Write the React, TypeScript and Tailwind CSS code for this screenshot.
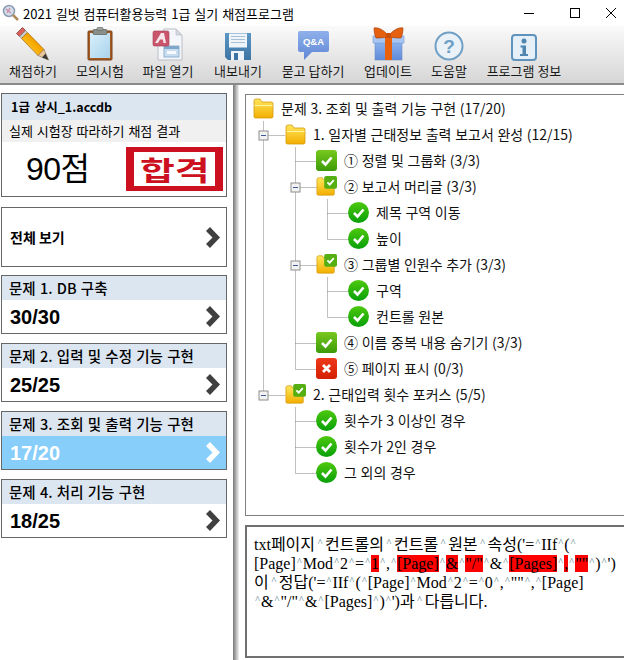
import React from 'react'

const KR = { fontFamily: '"Noto Sans CJK KR", "Liberation Sans", sans-serif' }

const PencilIcon = () => (
    <svg width="34" height="34" viewBox="0 0 34 34">
        <defs>
            <linearGradient id="pencilBody" x1="0" y1="1" x2="1" y2="0">
                <stop offset="0" stopColor="#ffdc50" />
                <stop offset="0.55" stopColor="#f7a800" />
                <stop offset="1" stopColor="#c97400" />
            </linearGradient>
        </defs>
        <path d="M6.5 0.5 L0.5 6.5 L3.5 9.5 L9.5 3.5 Z" fill="#d8605c" stroke="#8a3a38" strokeWidth="0.8" />
        <path d="M3.5 9.5 L9.5 3.5 L11.5 5.5 L5.5 11.5 Z" fill="#c9c9c9" stroke="#777" strokeWidth="0.6" />
        <path d="M5.5 11.5 L11.5 5.5 L28 22.5 L22 28.5 Z" fill="url(#pencilBody)" stroke="#a86a10" strokeWidth="0.7" />
        <path d="M22 28.5 L28 22.5 L32.5 33 Z" fill="#e9c79a" stroke="#8d6a45" strokeWidth="0.6" />
        <path d="M29.5 26.5 L32.5 33 L26 30.5 Z" fill="#3a3a3a" />
    </svg>
)

const ClipboardIcon = () => (
    <svg width="26" height="34" viewBox="0 0 26 34">
        <defs>
            <linearGradient id="clipPaper" x1="0" y1="0" x2="1" y2="1">
                <stop offset="0" stopColor="#d9effa" />
                <stop offset="1" stopColor="#a9d3ec" />
            </linearGradient>
        </defs>
        <rect x="1" y="4" width="24" height="29" rx="1" fill="#a65a22" stroke="#7b4116" />
        <rect x="3" y="6" width="20" height="25" fill="url(#clipPaper)" />
        <rect x="6" y="2.5" width="14" height="5" rx="1" fill="#8a8f8a" stroke="#5a5f5a" strokeWidth="0.7" />
        <rect x="10" y="0.5" width="6" height="3" rx="1" fill="#9ea39e" stroke="#5a5f5a" strokeWidth="0.6" />
    </svg>
)

const AccessIcon = () => (
    <svg width="32" height="33" viewBox="0 0 32 33">
        <path d="M12 1 H24 L30 7 V32 H6 V14 Z" fill="#f4f6f9" stroke="#b9bec6" />
        <path d="M24 1 V7 H30 Z" fill="#d5d9df" stroke="#b9bec6" strokeWidth="0.7" />
        <rect x="12" y="18" width="15" height="11" fill="#c8def0" stroke="#7ea6c9" strokeWidth="0.8" />
        <rect x="12" y="18" width="15" height="3" fill="#7ea6c9" />
        <rect x="15" y="23" width="9" height="3" fill="#f7fafc" />
        <rect x="1" y="3" width="16" height="15" rx="1.5" fill="#c9566b" stroke="#a53c52" strokeWidth="0.6" />
        <path d="M3 15 L9 5 H12 L14 15 H11.5 L10.8 11.5 H8 L6 15 Z" fill="#f7e7ea" />
    </svg>
)

const FloppyIcon = () => (
    <svg width="28" height="29" viewBox="0 0 28 29">
        <defs>
            <linearGradient id="floppyBody" x1="0" y1="0" x2="0" y2="1">
                <stop offset="0" stopColor="#5d97c4" />
                <stop offset="1" stopColor="#3d74a3" />
            </linearGradient>
        </defs>
        <path d="M1 1 H27 V28 H4 L1 25 Z" fill="url(#floppyBody)" />
        <rect x="5" y="1.5" width="18" height="14" fill="#eef4f9" />
        <path d="M7 4.5 H21 M7 7.5 H21 M7 10.5 H21" stroke="#a8c0d4" />
        <rect x="7" y="19" width="13" height="9" fill="#eef4f9" />
        <rect x="10" y="21" width="4" height="7" fill="#3d74a3" />
    </svg>
)

const QnaIcon = () => (
    <svg width="33" height="31" viewBox="0 0 33 31">
        <defs>
            <linearGradient id="qnaBubble" x1="0" y1="0" x2="0" y2="1">
                <stop offset="0" stopColor="#8fb0ea" />
                <stop offset="1" stopColor="#5f86d6" />
            </linearGradient>
        </defs>
        <path d="M3 1 H30 A2 2 0 0 1 32 3 V20 A2 2 0 0 1 30 22 H15 L7 30 V22 H3 A2 2 0 0 1 1 20 V3 A2 2 0 0 1 3 1 Z" fill="url(#qnaBubble)" />
        <text x="16.5" y="15" textAnchor="middle" fill="#ffffff" fontSize="9.5" fontWeight="700" fontFamily='"Liberation Sans", sans-serif'>Q&amp;A</text>
    </svg>
)

const GiftIcon = () => (
    <svg width="33" height="34" viewBox="0 0 33 34">
        <defs>
            <linearGradient id="giftBox" x1="0" y1="0" x2="0" y2="1">
                <stop offset="0" stopColor="#8cb2ee" />
                <stop offset="1" stopColor="#5f8ad8" />
            </linearGradient>
        </defs>
        <rect x="3" y="15" width="27" height="18" fill="url(#giftBox)" stroke="#6b8cc7" strokeWidth="0.6" />
        <rect x="1" y="9" width="31" height="7" fill="#a7c6f3" stroke="#7a9ad2" strokeWidth="0.6" />
        <rect x="13" y="9" width="7" height="24" fill="#e85f0c" />
        <path d="M16.5 9 C12 3 6 0 2 1 C2 5 3 9 4 11 C8 11 13 11 16.5 9 Z" fill="#e5600f" stroke="#a94008" strokeWidth="0.7" />
        <path d="M16.5 9 C21 3 27 0 31 1 C31 5 30 9 29 11 C25 11 20 11 16.5 9 Z" fill="#e5600f" stroke="#a94008" strokeWidth="0.7" />
        <rect x="14" y="6" width="5" height="5" rx="1" fill="#c9500b" />
    </svg>
)

const HelpIcon = () => (
    <svg width="30" height="30" viewBox="0 0 30 30">
        <circle cx="15" cy="15" r="13.5" fill="#eaf2f8" stroke="#6f9fc4" strokeWidth="2" />
        <text x="15" y="21.5" textAnchor="middle" fill="#6f9fc4" fontSize="19" fontWeight="700" fontFamily='"Liberation Sans", sans-serif'>?</text>
    </svg>
)

const InfoIcon = () => (
    <svg width="26" height="27" viewBox="0 0 26 27">
        <rect x="1" y="1" width="24" height="25" rx="3" fill="#e4eff7" stroke="#5f93bb" strokeWidth="2" />
        <circle cx="13" cy="7" r="2.5" fill="#4f86b0" />
        <path d="M9.5 11.5 H15 V20 H17 V22 H9 V20 H11.5 V13.5 H9.5 Z" fill="#4f86b0" />
    </svg>
)

const Chevron = ({ white = false }: { white?: boolean }) => (
    <svg width="14" height="21" viewBox="0 0 14 21" className={white ? 'text-white' : 'text-[#404040]'}>
        <path d="M0 4 L4 0 L14 10.5 L4 21 L0 17 L6.5 10.5 Z" fill="currentColor" />
    </svg>
)

const FolderIcon = ({ id }: { id: string }) => (
    <svg width="21" height="21" viewBox="0 0 21 21">
        <defs>
            <linearGradient id={id} x1="0" y1="0" x2="0" y2="1">
                <stop offset="0" stopColor="#ffe75c" />
                <stop offset="1" stopColor="#f2ae00" />
            </linearGradient>
        </defs>
        <path d="M1 3 A2 2 0 0 1 3 1 H7 L9 4 H19 A2 2 0 0 1 20 6 V19 A1.5 1.5 0 0 1 18.5 20 H2.5 A1.5 1.5 0 0 1 1 19 Z" fill={`url(#${id})`} stroke="#d69a10" strokeWidth="0.8" />
        <path d="M1.5 7.5 H19.5" stroke="#fff3a6" />
    </svg>
)

const CheckMark = () => <path d="M6 11 L9.5 14.5 L15.5 7.5" fill="none" stroke="#ffffff" strokeWidth="2.6" />

const SquareCheck = ({ id }: { id: string }) => (
    <svg width="21" height="21" viewBox="0 0 21 21">
        <defs>
            <linearGradient id={id} x1="0" y1="0" x2="0" y2="1">
                <stop offset="0" stopColor="#78c81e" />
                <stop offset="1" stopColor="#3c9a08" />
            </linearGradient>
        </defs>
        <rect x="0" y="0" width="21" height="21" rx="3" fill={`url(#${id})`} />
        <CheckMark />
    </svg>
)

const SquareCross = () => (
    <svg width="21" height="21" viewBox="0 0 21 21">
        <defs>
            <linearGradient id="crossRed" x1="0" y1="0" x2="0" y2="1">
                <stop offset="0" stopColor="#ee3a1c" />
                <stop offset="1" stopColor="#d42000" />
            </linearGradient>
        </defs>
        <rect x="0" y="0" width="21" height="21" rx="3" fill="url(#crossRed)" />
        <path d="M7 7 L14 14 M14 7 L7 14" stroke="#ffffff" strokeWidth="2.8" />
    </svg>
)

const CircleCheck = ({ id }: { id: string }) => (
    <svg width="21" height="21" viewBox="0 0 21 21">
        <defs>
            <linearGradient id={id} x1="0" y1="0" x2="0" y2="1">
                <stop offset="0" stopColor="#4ec80e" />
                <stop offset="1" stopColor="#08a008" />
            </linearGradient>
        </defs>
        <circle cx="10.5" cy="10.5" r="10.5" fill={`url(#${id})`} />
        <CheckMark />
    </svg>
)

const FolderCheck = ({ id }: { id: string }) => (
    <svg width="23" height="22" viewBox="0 0 23 22">
        <defs>
            <linearGradient id={id} x1="0" y1="0" x2="0" y2="1">
                <stop offset="0" stopColor="#ffe75c" />
                <stop offset="1" stopColor="#f2ae00" />
            </linearGradient>
        </defs>
        <path d="M1 4 A2 2 0 0 1 3 2 H7 L8 4 H20 V20 A1.5 1.5 0 0 1 18.5 21 H2.5 A1.5 1.5 0 0 1 1 20 Z" fill={`url(#${id})`} stroke="#d69a10" strokeWidth="0.8" />
        <rect x="9" y="0" width="14" height="14" rx="2" fill="#55ae12" />
        <path d="M12.5 7 L15 9.5 L19.5 4.5" fill="none" stroke="#ffffff" strokeWidth="2" />
    </svg>
)

const TOOLBAR = [
    { label: '채점하기', width: 'w-[66px]', icon: <PencilIcon /> },
    { label: '모의시험', width: 'w-[68px]', icon: <ClipboardIcon /> },
    { label: '파일 열기', width: 'w-[68px]', icon: <AccessIcon /> },
    { label: '내보내기', width: 'w-[72px]', icon: <FloppyIcon /> },
    { label: '묻고 답하기', width: 'w-[78px]', icon: <QnaIcon /> },
    { label: '업데이트', width: 'w-[72px]', icon: <GiftIcon /> },
    { label: '도움말', width: 'w-[50px]', icon: <HelpIcon /> },
    { label: '프로그램 정보', width: 'w-[100px]', icon: <InfoIcon /> },
]

const QUESTIONS = [
    { title: '문제 1. DB 구축', score: '30/30', active: false },
    { title: '문제 2. 입력 및 수정 기능 구현', score: '25/25', active: false },
    { title: '문제 3. 조회 및 출력 기능 구현', score: '17/20', active: true },
    { title: '문제 4. 처리 기능 구현', score: '18/25', active: false },
]

const TREE = [
    { level: 0, icon: <FolderIcon id="f0" />, text: '문제 3. 조회 및 출력 기능 구현 (17/20)' },
    { level: 1, icon: <FolderIcon id="f1" />, text: '1. 일자별 근태정보 출력 보고서 완성 (12/15)' },
    { level: 2, icon: <SquareCheck id="s1" />, text: '① 정렬 및 그룹화 (3/3)' },
    { level: 2, icon: <FolderCheck id="c1" />, text: '② 보고서 머리글 (3/3)' },
    { level: 3, icon: <CircleCheck id="o1" />, text: '제목 구역 이동' },
    { level: 3, icon: <CircleCheck id="o2" />, text: '높이' },
    { level: 2, icon: <FolderCheck id="c2" />, text: '③ 그룹별 인원수 추가 (3/3)' },
    { level: 3, icon: <CircleCheck id="o3" />, text: '구역' },
    { level: 3, icon: <CircleCheck id="o4" />, text: '컨트롤 원본' },
    { level: 2, icon: <SquareCheck id="s2" />, text: '④ 이름 중복 내용 숨기기 (3/3)' },
    { level: 2, icon: <SquareCross />, text: '⑤ 페이지 표시 (0/3)' },
    { level: 1, icon: <FolderCheck id="c3" />, text: '2. 근태입력 횟수 포커스 (5/5)' },
    { level: 2, icon: <CircleCheck id="o5" />, text: '횟수가 3 이상인 경우' },
    { level: 2, icon: <CircleCheck id="o6" />, text: '횟수가 2인 경우' },
    { level: 2, icon: <CircleCheck id="o7" />, text: '그 외의 경우' },
]

// connector lines of the tree, in coordinates of the tree box
const TREE_LINES = [
    'M17 26 V300', 'M17 40 H38', 'M17 300 H38',
    'M49 52 V274', 'M49 66 H70', 'M49 92 H70', 'M49 170 H70', 'M49 248 H70', 'M49 274 H70',
    'M81 104 V144', 'M81 118 H102', 'M81 144 H102',
    'M81 182 V222', 'M81 196 H102', 'M81 222 H102',
    'M49 312 V378', 'M49 326 H70', 'M49 352 H70', 'M49 378 H70',
]

const EXPANDERS = [[17, 40], [49, 92], [49, 170], [17, 300]]

// wide: the gap between two hangul words, which the reference draws a bit larger
const Caret = ({ wide = false }: { wide?: boolean }) => (
    <span className={`inline-block text-center text-[10px] leading-none align-[4px] text-[#44727a] ${wide ? 'w-[10px]' : 'w-[7px]'}`}>^</span>
)

const Red = ({ children }: { children: React.ReactNode }) => <span className="bg-[#ff0000]">{children}</span>

export default function App() {
    return (
        <div className="w-[624px] h-[660px] flex flex-col overflow-hidden bg-white text-black" style={KR}>
            {/* Title bar */}
            <div className="h-[26px] flex items-center shrink-0">
                <svg width="18" height="18" viewBox="0 0 18 18" className="ml-[2px]">
                    <circle cx="7" cy="7" r="5.5" fill="#d5dde8" stroke="#8b9bb4" strokeWidth="1.5" />
                    <path d="M4 5 L9 9 M8 4 L5 9" stroke="#c987a4" strokeWidth="1.2" />
                    <path d="M11 11 L16 16" stroke="#b08a5a" strokeWidth="2.5" />
                </svg>
                <span className="ml-[3px] text-[13px] leading-none [word-spacing:1px]">2021 길벗 컴퓨터활용능력 1급 실기 채점프로그램</span>
                <div className="ml-auto flex items-center">
                    <div className="w-[46px] h-[26px] flex items-center justify-center">
                        <div className="w-[10px] h-px bg-black" />
                    </div>
                    <div className="w-[46px] h-[26px] flex items-center justify-center">
                        <div className="w-[10px] h-[10px] border border-black" />
                    </div>
                    <svg width="10" height="10" viewBox="0 0 10 10" className="mx-[8px]">
                        <path d="M0 0 L10 10 M10 0 L0 10" stroke="#000" strokeWidth="1" />
                    </svg>
                </div>
            </div>

            {/* Toolbar */}
            <div className="h-[59px] shrink-0 flex bg-gradient-to-b from-[#fafafa] to-[#d6d6d6] border-b-2 border-[#8a8a8a]">
                {TOOLBAR.map(item => (
                    <div key={item.label} className={`${item.width} flex flex-col items-center`}>
                        <div className="h-[35px] flex items-end justify-center">{item.icon}</div>
                        <span className="mt-[2px] text-[13px] leading-[16px] whitespace-nowrap text-[#1a1a1a]">{item.label}</span>
                    </div>
                ))}
            </div>

            <div className="flex-1 flex min-h-0">
                {/* Left panel */}
                <div className="w-[233px] shrink-0 pl-px pr-[6px] pt-[8px] flex flex-col">
                    <div className="h-[104px] border border-[#666666] flex flex-col">
                        <div className="h-[26px] bg-[#dce6f1] flex items-center pl-[9px] text-[12.5px] font-bold [word-spacing:2px]">1급 상시_1.accdb</div>
                        <div className="h-[22px] bg-[#f0f0f0] flex items-center pl-[7px] text-[13px] [word-spacing:1px]">실제 시험장 따라하기 채점 결과</div>
                        <div className="flex-1 flex items-center pl-[24px]">
                            <span className="text-[32px] leading-none tracking-[-0.5px]" style={{ fontFamily: '"Liberation Sans", "Noto Sans CJK KR", sans-serif' }}>90점</span>
                            <div className="ml-auto mr-[3px] w-[97px] h-[44px] border-x-[8px] border-y-[5px] border-[#cc1020] flex items-center justify-center overflow-hidden">
                                <span className="text-[#cc1020] text-[27px] leading-none font-bold scale-x-[1.4]">합격</span>
                            </div>
                        </div>
                    </div>

                    <div className="mt-[10px] h-[60px] border border-[#666666] flex items-center justify-between pl-[8px] pr-[6px]">
                        <span className="text-[14px] font-bold">전체 보기</span>
                        <Chevron />
                    </div>

                    <div className="mt-[8px] flex flex-col gap-[9px]">
                        {QUESTIONS.map(q => (
                            <div key={q.title} className="h-[59px] border border-[#666666] flex flex-col">
                                <div className="h-[24px] bg-[#dce6f1] flex items-center pl-[7px] text-[14.5px] font-medium [word-spacing:1px]">{q.title}</div>
                                <div className={`flex-1 flex items-center justify-between pl-[8px] pr-[6px] ${q.active ? 'bg-[#87cefa] text-white' : 'bg-white'}`}>
                                    <span className="text-[20px] leading-none font-bold" style={{ fontFamily: '"Liberation Sans", sans-serif' }}>{q.score}</span>
                                    <Chevron white={q.active} />
                                </div>
                            </div>
                        ))}
                    </div>
                </div>

                {/* Splitter */}
                <div className="w-[6px] shrink-0 bg-gradient-to-r from-[#777777] to-[#f4f4f4]" />

                {/* Right panel */}
                <div className="flex-1 min-w-0 pl-[6px] pt-[9px] pb-[2px] flex flex-col gap-[9px]">
                    <div className="relative h-[422px] shrink-0 border border-[#808080] border-r-0 pl-[7px] overflow-hidden">
                        <svg className="absolute left-0 top-0" width="120" height="420" viewBox="0 0 120 420">
                            {TREE_LINES.map(d => (
                                <path key={d} d={d} transform="translate(0.5 0.5)" fill="none" stroke="#808080" strokeDasharray="1 1" />
                            ))}
                            {EXPANDERS.map(([x, y]) => (
                                <g key={`${x}-${y}`}>
                                    <rect x={x - 4} y={y - 4} width="9" height="9" fill="#f2f2f2" stroke="#8e8e8e" />
                                    <path d={`M${x - 2} ${y + 0.5} H${x + 3}`} stroke="#3a5a9a" />
                                </g>
                            ))}
                        </svg>
                        {TREE.map(row => (
                            <div
                                key={row.text}
                                className={`relative h-[26px] flex items-center gap-[7px] text-[14px] leading-none whitespace-nowrap text-[#111111] [word-spacing:0.5px] ${row.level === 0 ? '' : row.level === 1 ? 'ml-[32px]' : row.level === 2 ? 'ml-[63px]' : 'ml-[95px]'}`}
                            >
                                <span className="w-[21px] shrink-0 flex">{row.icon}</span>
                                <span>{row.text}</span>
                            </div>
                        ))}
                    </div>

                    <div className="flex-1 border-2 border-[#707070] border-r-0 pl-[7px] pt-[8px] text-[16px] leading-[19px] whitespace-nowrap" style={{ fontFamily: '"Liberation Serif", "Noto Sans CJK KR", serif' }}>
                        <div>txt페이지<Caret wide />컨트롤의<Caret wide />컨트롤<Caret wide />원본<Caret wide />속성('=<Caret />IIf<Caret />(<Caret /></div>
                        <div>[Page]<Caret />Mod<Caret />2<Caret />=<Caret /><Red>1</Red><Caret />,<Caret /><Red>[Page]</Red><Caret /><Red>&amp;</Red><Caret /><Red>"/"</Red><Caret />&amp;<Caret /><Red>[Pages]</Red><Caret /><Red>,</Red><Caret /><Red>""</Red><Caret />)<Caret />')</div>
                        <div>이<Caret wide />정답('=<Caret />IIf<Caret />(<Caret />[Page]<Caret />Mod<Caret />2<Caret />=<Caret />0<Caret />,<Caret />""<Caret />,<Caret />[Page]</div>
                        <div><Caret />&amp;<Caret />"/"<Caret />&amp;<Caret />[Pages]<Caret />)<Caret />')과<Caret wide />다릅니다.</div>
                    </div>
                </div>
            </div>
        </div>
    )
}
